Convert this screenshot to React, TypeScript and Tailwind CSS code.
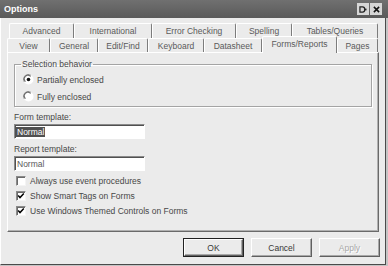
import type { ReactNode } from "react";

const backRow = [
  { label: "Advanced", w: "w-[65px]" },
  { label: "International", w: "w-[78px]" },
  { label: "Error Checking", w: "w-[84px]" },
  { label: "Spelling", w: "w-[56px]" },
  { label: "Tables/Queries", w: "w-[86px]" },
];

const frontRow = [
  { label: "View", w: "w-[43px]" },
  { label: "General", w: "w-[48px]" },
  { label: "Edit/Find", w: "w-[50px]" },
  { label: "Keyboard", w: "w-[56px]" },
  { label: "Datasheet", w: "w-[58px]" },
  { label: "Forms/Reports", w: "w-[75px]", selected: true },
  { label: "Pages", w: "w-[41px]" },
];

function Tab({ label, w, selected }: { label: string; w: string; selected?: boolean }) {
  return (
    <div
      className={`flex shrink-0 items-center justify-center rounded-t-[2px] border-x border-t border-t-white border-l-white border-r-[#7c7c7c] bg-[#ebebeb] text-[#5a5a5a] ${w} ${
        selected ? "relative z-10 -mb-px h-[17px] pb-[2px]" : "h-full"
      }`}
    >
      {label}
    </div>
  );
}

function Radio({ checked, children }: { checked?: boolean; children: ReactNode }) {
  return (
    <div className="flex h-[17px] items-center gap-[3px] pl-[8px]">
      <svg width="11" height="11" viewBox="0 0 11 11">
        <circle cx="5.5" cy="5.5" r="5" fill="#fff" />
        <path d="M1.3 8 A4.8 4.8 0 0 1 8 1.3" fill="none" stroke="#9a9a9a" strokeWidth="1" />
        <path d="M2.3 7.6 A3.7 3.7 0 0 1 7.6 2.3" fill="none" stroke="#505050" strokeWidth="1" />
        {checked && <circle cx="5.5" cy="5.5" r="1.8" fill="#111" />}
      </svg>
      <span>{children}</span>
    </div>
  );
}

function Check({ checked, children }: { checked?: boolean; children: ReactNode }) {
  return (
    <div className="flex h-[15px] items-center gap-[4px] pl-[2px]">
      <div className="flex h-[10px] w-[10px] items-center justify-center border border-t-[#8a8a8a] border-l-[#8a8a8a] border-r-[#f4f4f4] border-b-[#f4f4f4] bg-white shadow-[inset_1px_1px_0_#6a6a6a]">
        {checked && (
          <svg width="8" height="8" viewBox="0 0 8 8">
            <path d="M1.2 3.6 L3 5.6 L6.8 1.6" fill="none" stroke="#000" strokeWidth="1.5" />
          </svg>
        )}
      </div>
      <span>{children}</span>
    </div>
  );
}

function Field({ children }: { children: ReactNode }) {
  return (
    <div className="flex h-[15px] w-[131px] items-center border border-t-[#8a8a8a] border-l-[#8a8a8a] border-r-white border-b-white bg-white pl-[1px] shadow-[inset_1px_1px_0_#505050]">
      {children}
    </div>
  );
}

function Button({ label, isDefault, disabled }: { label: string; isDefault?: boolean; disabled?: boolean }) {
  return (
    <div className={`flex h-[19px] w-[61px] items-center justify-center ${isDefault ? "border border-[#222]" : ""}`}>
      <div className="flex h-full w-full items-center justify-center border border-t-white border-l-white border-r-[#606060] border-b-[#606060] shadow-[inset_-1px_-1px_0_#a8a8a8]">
        <span className={disabled ? "text-[#a8a8a8] [text-shadow:1px_1px_0_#fff]" : "text-[#3a3a3a]"}>{label}</span>
      </div>
    </div>
  );
}

export default function App() {
  return (
    <div className="flex h-[266px] w-[388px] flex-col bg-[#c4c4c4] font-['Liberation_Sans',Arial,sans-serif] text-[8.5px] leading-[10px] text-[#474747]">
      <div className="flex h-[18px] shrink-0 items-center justify-between bg-gradient-to-b from-[#707070] to-[#5a5a5a] pl-[4px] pr-[6px]">
        <span className="text-[9px] font-bold text-white">Options</span>
        <div className="flex gap-px">
          <div className="flex h-[12px] w-[12px] items-center justify-center bg-[#d6d6d6]">
            <svg width="8" height="7" viewBox="0 0 9 8">
              <path d="M1 1 H4 Q6.5 1 6.5 4 Q6.5 7 4 7 H1 Z" fill="none" stroke="#222" strokeWidth="1.4" />
              <rect x="6.5" y="3" width="2" height="2" fill="#222" />
            </svg>
          </div>
          <div className="flex h-[12px] w-[12px] items-center justify-center bg-[#d6d6d6]">
            <svg width="7" height="7" viewBox="0 0 8 8">
              <path d="M1 1 L7 7 M7 1 L1 7" stroke="#111" strokeWidth="1.7" />
            </svg>
          </div>
        </div>
      </div>

      <div className="mr-[2px] mb-px flex flex-1 flex-col border-r border-b border-l border-[#4a4a4a] border-l-white bg-[#ebebeb]">
        <div className="mt-[5px] ml-[8px] flex h-[15px]">
          {backRow.map((t) => (
            <Tab key={t.label} label={t.label} w={t.w} />
          ))}
        </div>
        <div className="ml-[6px] flex h-[14px] items-end">
          {frontRow.map((t) => (
            <Tab key={t.label} label={t.label} w={t.w} selected={t.selected} />
          ))}
        </div>

        <div className="ml-[6px] flex h-[180px] w-[372px] flex-col border border-t-white border-l-white border-r-[#6a6a6a] border-b-[#6a6a6a] px-[6px] pt-[6px] shadow-[inset_-1px_-1px_0_#b0b0b0]">
          <fieldset className="w-[358px] border border-[#a4a4a4] pb-px shadow-[inset_1px_1px_0_#fff,1px_1px_0_#fff]">
            <legend className="ml-[6px] px-[1px] leading-[10px]">Selection behavior</legend>
            <div className="pt-[2px]">
              <Radio checked>Partially enclosed</Radio>
              <Radio>Fully enclosed</Radio>
            </div>
          </fieldset>

          <div className="mt-[5px]">Form template:</div>
          <div className="mt-[2px]">
            <Field>
              <span className="bg-[#505050] px-px text-white">Normal</span>
            </Field>
          </div>
          <div className="mt-[5px]">Report template:</div>
          <div className="mt-[2px]">
            <Field>
              <span className="px-px text-[#5a5a5a]">Normal</span>
            </Field>
          </div>

          <div className="mt-[2px] flex flex-col">
            <Check>Always use event procedures</Check>
            <Check checked>Show Smart Tags on Forms</Check>
            <Check checked>Use Windows Themed Controls on Forms</Check>
          </div>
        </div>

        <div className="mt-[6px] flex justify-end gap-[7px] pr-[5px]">
          <Button label="OK" isDefault />
          <Button label="Cancel" />
          <Button label="Apply" disabled />
        </div>
      </div>
    </div>
  );
}
